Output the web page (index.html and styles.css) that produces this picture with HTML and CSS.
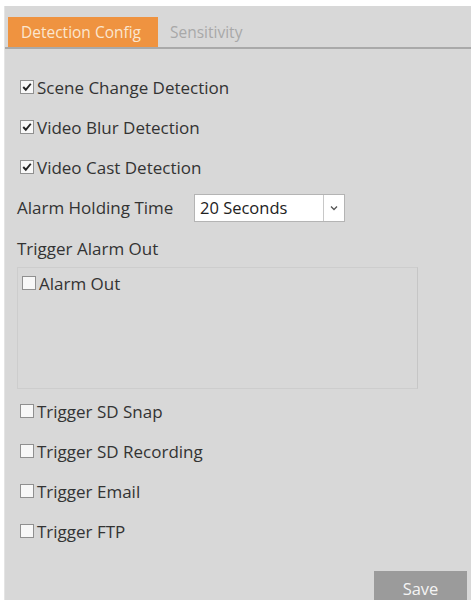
FILE: index.html
```html
<!DOCTYPE html>
<html>
<head>
<meta charset="utf-8">
<link rel="stylesheet" href="styles.css">
</head>
<body>
<div class="page">
  <div class="panel">
    <div class="tabs">
      <div class="tab active">Detection Config</div>
      <div class="tab">Sensitivity</div>
    </div>
    <div class="form">
      <label class="row first"><span class="cb checked"><svg viewBox="0 0 14 14" width="14" height="14"><path d="M2.6 7 L5.6 10.2 L11.4 3.2" fill="none" stroke="#222" stroke-width="2.2"/></svg></span>Scene Change Detection</label>
      <label class="row"><span class="cb checked"><svg viewBox="0 0 14 14" width="14" height="14"><path d="M2.6 7 L5.6 10.2 L11.4 3.2" fill="none" stroke="#222" stroke-width="2.2"/></svg></span>Video Blur Detection</label>
      <label class="row"><span class="cb checked"><svg viewBox="0 0 14 14" width="14" height="14"><path d="M2.6 7 L5.6 10.2 L11.4 3.2" fill="none" stroke="#222" stroke-width="2.2"/></svg></span>Video Cast Detection</label>
      <div class="row holding">
        <span class="lbl">Alarm Holding Time</span>
        <div class="select"><span class="val">20 Seconds</span><span class="arrow"><svg viewBox="0 0 8 6" width="8" height="6"><path d="M1 1.5 L4 4.5 L7 1.5" fill="none" stroke="#555" stroke-width="1.3"/></svg></span></div>
      </div>
      <div class="row title">Trigger Alarm Out</div>
      <div class="alarmbox">
        <label class="boxrow"><span class="cb"></span>Alarm Out</label>
      </div>
      <label class="row"><span class="cb"></span>Trigger SD Snap</label>
      <label class="row"><span class="cb"></span>Trigger SD Recording</label>
      <label class="row"><span class="cb"></span>Trigger Email</label>
      <label class="row"><span class="cb"></span>Trigger FTP</label>
      <div class="actions"><button class="save">Save</button></div>
    </div>
  </div>
</div>
</body>
</html>
```

FILE: styles.css
```css
html, body {
  margin: 0;
  padding: 0;
  background: #ffffff;
  height: 100%;
}
body {
  font-family: "Open Sans", "Noto Sans", sans-serif;
  color: #333333;
}
.page {
  padding: 6px 2px 0 4px;
  height: 600px;
  box-sizing: border-box;
  overflow: hidden;
}
.panel {
  background: #d8d8d8;
  height: 100%;
  border-left: 1px solid #e4e4e4;
  box-sizing: border-box;
}
.tabs {
  display: flex;
  padding: 11px 0 0 3px;
  border-bottom: 2px solid #a9a9a9;
}
.tab {
  height: 30px;
  line-height: 30px;
  padding: 0 12px 0 12px;
  font-size: 15.5px;
  color: #a8a8a8;
}
.tab.active {
  background: #ef9340;
  color: #fbe6cf;
  width: 150px;
  box-sizing: border-box;
  padding-left: 13px;
}
.form {
  padding: 18px 0 0 15px;
}
.row {
  display: flex;
  align-items: center;
  height: 40px;
  font-size: 17px;
}
.cb {
  width: 14px;
  height: 14px;
  box-sizing: border-box;
  background: #f8f8f8;
  border: 1px solid #909090;
  display: inline-flex;
  align-items: center;
  justify-content: center;
  margin-right: 3px;
  flex: none;
}
.cb svg {
  display: block;
}
.row.holding {
  margin-left: -3px;
  height: 41px;
}
.lbl {
  width: 177px;
}
.select {
  width: 151px;
  height: 28px;
  box-sizing: border-box;
  background: #ffffff;
  border: 1px solid #b4b4b4;
  display: flex;
  align-items: center;
  font-size: 16.5px;
}
.select .val {
  flex: 1;
  padding-left: 5px;
  color: #222;
}
.select .arrow {
  width: 20px;
  height: 100%;
  border-left: 1px solid #c8c8c8;
  display: flex;
  align-items: center;
  justify-content: center;
}
.row.title {
  margin-left: -3px;
}
.alarmbox {
  margin: -1px 0 0 -3px;
  width: 401px;
  height: 122px;
  box-sizing: border-box;
  border: 1px solid #cdcdcd;
  border-right-color: #c6c6c6;
  padding: 0 0 0 4px;
}
.boxrow {
  display: flex;
  align-items: center;
  height: 30px;
  font-size: 17px;
}
.alarmbox + .row {
  margin-top: 2px;
}
.actions {
  display: flex;
  justify-content: flex-end;
  padding: 20px 4px 0 0;
}
.save {
  width: 93px;
  height: 34px;
  border: none;
  background: #9b9b9b;
  color: #f4f4f4;
  font-family: "Open Sans", "Noto Sans", sans-serif;
  font-size: 16.5px;
  padding: 0;
}
```
